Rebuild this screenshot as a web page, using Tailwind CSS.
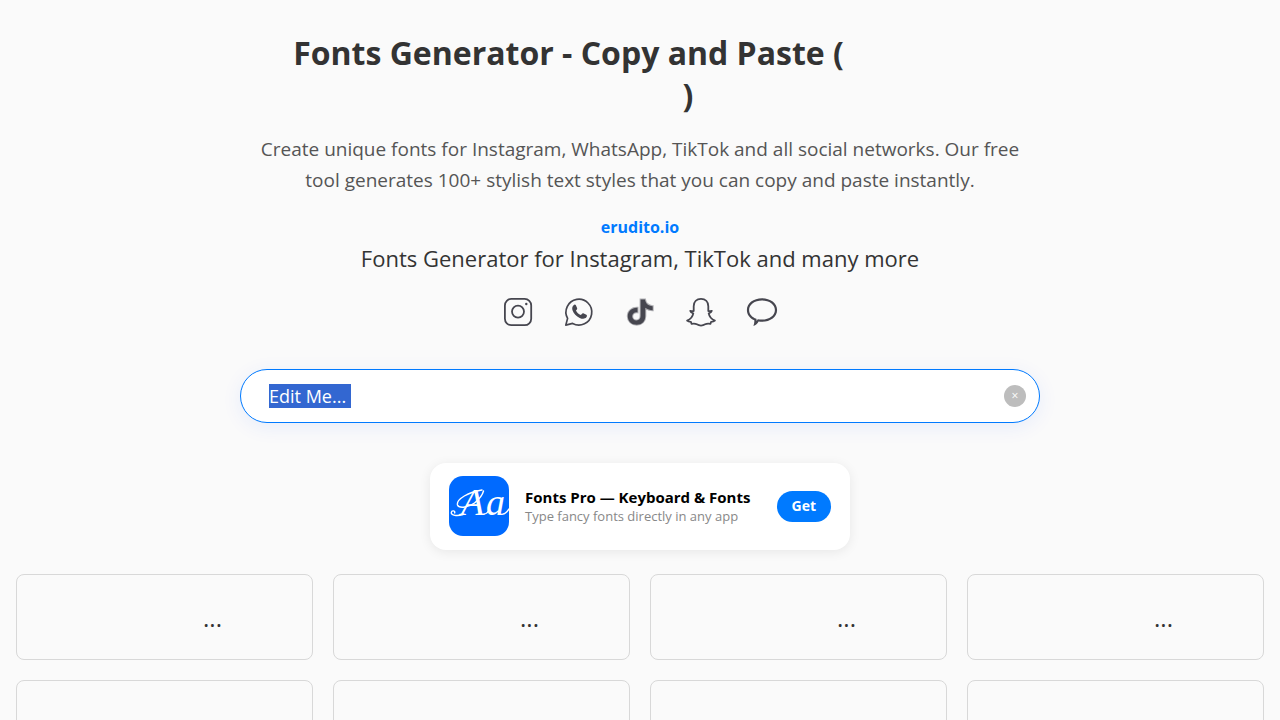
<!DOCTYPE html>
<html lang="en">
<head>
  <meta charset="UTF-8" />
  <meta name="viewport" content="width=device-width, initial-scale=1.0"/>
  <title>Fonts Generator - Copy and Paste</title>
  <script src="https://cdn.jsdelivr.net/npm/@tailwindcss/browser@4"></script>
</head>
<body class="bg-[#fafafa] text-[#333] font-['Open_Sans',sans-serif] overflow-x-hidden">

  <header class="max-w-[800px] mx-auto pt-8 text-center">
    <h1 class="text-[32px] leading-[42px] font-bold">
      Fonts Generator - Copy and Paste (<span class="inline-block w-[143px]"></span><br>
      <span class="inline-block w-[96px]"></span>)
    </h1>
    <p class="mt-[18px] px-3 text-[19px] leading-[31px] text-[#555]">Create unique fonts for Instagram, WhatsApp, TikTok and all social networks. Our free tool generates 100+ stylish text styles that you can copy and paste instantly.</p>
    <a href="#" class="block w-fit mx-auto mt-5 text-base leading-[22px] font-bold text-[#007aff]">erudito.io</a>
    <h2 class="mt-1 text-[22px] leading-8">Fonts Generator for Instagram, TikTok and many more</h2>

    <div class="mt-[22px] flex justify-center gap-[29px] text-[#46464f]">
      <svg class="size-8" viewBox="0 0 32 32" fill="none" stroke="currentColor" stroke-width="1.8">
        <rect x="2.9" y="2.9" width="26.3" height="26.3" rx="6.5"/>
        <circle cx="16" cy="15.6" r="6"/>
        <circle cx="24.3" cy="8" r="1.2" fill="currentColor" stroke="none"/>
      </svg>
      <svg class="size-8" viewBox="0 0 32 32" fill="none" stroke="currentColor" stroke-width="1.7">
        <path d="M4.6 22.4A12.9 12.9 0 1 1 9.6 27.4L2.8 29.1Z" stroke-linejoin="round"/>
        <path d="M10.6 9.2c.8-.8 1.8-.8 2.3.1l1.2 2.7c.3.8-.1 1.4-1.1 2.5.9 2 2.6 3.7 4.8 4.6l1.6-1.6c.4-.4.9-.4 1.4-.1l2.6 1.4c.8.5.7 1.7 0 2.5-1.5 1.7-3.8 1.9-6.7.6-3.5-1.5-6-4.3-7.1-7.4-.8-2.3-.3-4 1-5.3Z" fill="currentColor" stroke="none"/>
      </svg>
      <svg class="size-8" viewBox="0 0 32 32" fill="currentColor" stroke="#b0b0b4" stroke-width="2" paint-order="stroke">
        <path d="M16.600 3.400h4.400c.5 3.800 3 6.300 7.700 6.800v4c-2.800 0-5.200-.9-7.400-2.400v8.400c0 5-3.600 8.500-8.600 8.500s-8.900-3.500-8.900-8.500c0-5 4-8.700 9.700-8.400v4.500c-3.100-.5-5.300 1.400-5.300 4 0 2.500 1.900 4.200 4.300 4.200 2.500 0 4.100-1.800 4.100-4.400Z"/>
      </svg>
      <svg class="size-8" viewBox="0 0 32 32" fill="none" stroke="currentColor" stroke-width="1.8" stroke-linejoin="round" stroke-linecap="round">
        <path d="M16 2.900c-4.400 0-7.300 3-7.300 7.400v4.600c-.8.5-1.800.3-3.500 0 .3 1.500 1.800 2 3.100 2.500-.7 3.600-2.900 5.900-6.200 7.200 1.100.9 2.400 1.100 3.800 1.200l.6 2c1.900-.4 3.700-.5 5.300.5 1.400.9 2.400 1.300 4.200 1.300s2.800-.4 4.200-1.300c1.600-1 3.400-.9 5.300-.5l.6-2c1.400-.1 2.700-.3 3.800-1.200-3.300-1.300-5.500-3.600-6.200-7.200 1.300-.5 2.800-1 3.100-2.500-1.700.3-2.700.5-3.500 0v-4.600c0-4.400-2.900-7.400-7.300-7.400Z"/>
      </svg>
      <svg class="size-8" viewBox="0 0 32 32" fill="currentColor" fill-rule="evenodd">
        <path d="M16 2.200C7.500 2.200.9 7.200.9 14c0 4.500 2.700 8.300 7.400 10.300.2 1.700-.1 3.800-.9 5.800 2.500-1 4.100-2.500 5.200-4.600 1.100.2 2.200.3 3.400.3 8.500 0 15.100-5 15.100-11.800S24.500 2.200 16 2.200Zm0 2.200c7.500 0 12.900 4.100 12.900 9.600S23.500 23.600 16 23.600c-1.500 0-2.900-.1-4.300-.4l-1 1.700-.3-2.100C5.900 21.300 3.100 18.100 3.100 14c0-5.500 5.400-9.600 12.900-9.600Z"/>
      </svg>
    </div>
  </header>

  <main>
    <div class="relative max-w-[800px] mx-auto mt-[41px]">
      <input type="text" id="textInput" aria-label="Your text" value="Edit Me... "
        class="block w-full h-[54px] rounded-full border border-[#007aff] bg-white pl-7 pr-14 text-lg leading-6 shadow-[0_4px_20px_rgba(0,80,255,0.08)] outline-none selection:bg-[#3367d1] selection:text-white" />
      <button id="clearBtn" aria-label="Clear text"
        class="absolute right-3.5 top-4 size-[22px] rounded-full bg-[#bdbdbd] text-white text-xs leading-[22px]">×</button>
    </div>

    <section class="max-w-[420px] mx-auto mt-10 px-[19px] pt-[13px] pb-3.5 flex items-center rounded-2xl bg-white shadow-[0_2px_12px_rgba(0,0,0,0.08)]">
      <svg class="size-[60px] shrink-0 rounded-[14px] bg-[#006aff]" viewBox="0 0 60 60" fill="none" stroke="white" stroke-width="1.4" stroke-linecap="round">
        <g class="font-['Liberation_Serif',serif] italic text-[38px]" fill="white" stroke="none">
          <text x="12" y="39">A<tspan x="37">a</tspan></text>
        </g>
        <!-- swashes around the monogram -->
        <path d="M14 38.500C8 40.500 2 39.500 2.300 36.500c.4-2.500 4-2 3.400.3M33 14C20 16 7 23 8.500 29c1.500 4 12 2 17-2s8-8 9-12"/>
        <path d="M35 38c2 0 4-2 5-4M54 38c2 0 4-2 6-5"/>
      </svg>
      <div class="ml-4 flex-1 whitespace-nowrap">
        <h3 class="text-[15px] leading-5 font-bold text-black">Fonts Pro — Keyboard &amp; Fonts</h3>
        <p class="text-[13px] leading-[18px] text-[#888]">Type fancy fonts directly in any app</p>
      </div>
      <button class="h-[31px] px-[15px] rounded-full bg-[#007aff] text-white text-sm leading-5 font-bold">Get</button>
    </section>

    <div id="fontGrid" class="grid grid-cols-4 gap-5 px-4 mt-6"></div>
  </main>

  <script>
    const fontGrid = document.getElementById("fontGrid");
    const textInput = document.getElementById("textInput");

    for (let i = 0; i < 8; i++) {
      const card = document.createElement("button");
      card.className = "h-[86px] pt-0.5 rounded-lg border border-[#d8d8d8] text-2xl leading-8";
      card.innerHTML = '<span class="inline-block w-24"></span>...';
      fontGrid.appendChild(card);
    }

    document.getElementById("clearBtn").addEventListener("click", () => {
      textInput.value = "";
      textInput.focus();
    });

    // keep the page at the top while the sample text is selected
    textInput.focus({ preventScroll: true });
    textInput.setSelectionRange(0, textInput.value.length);
    window.scrollTo(0, 0);
  </script>
</body>
</html>
